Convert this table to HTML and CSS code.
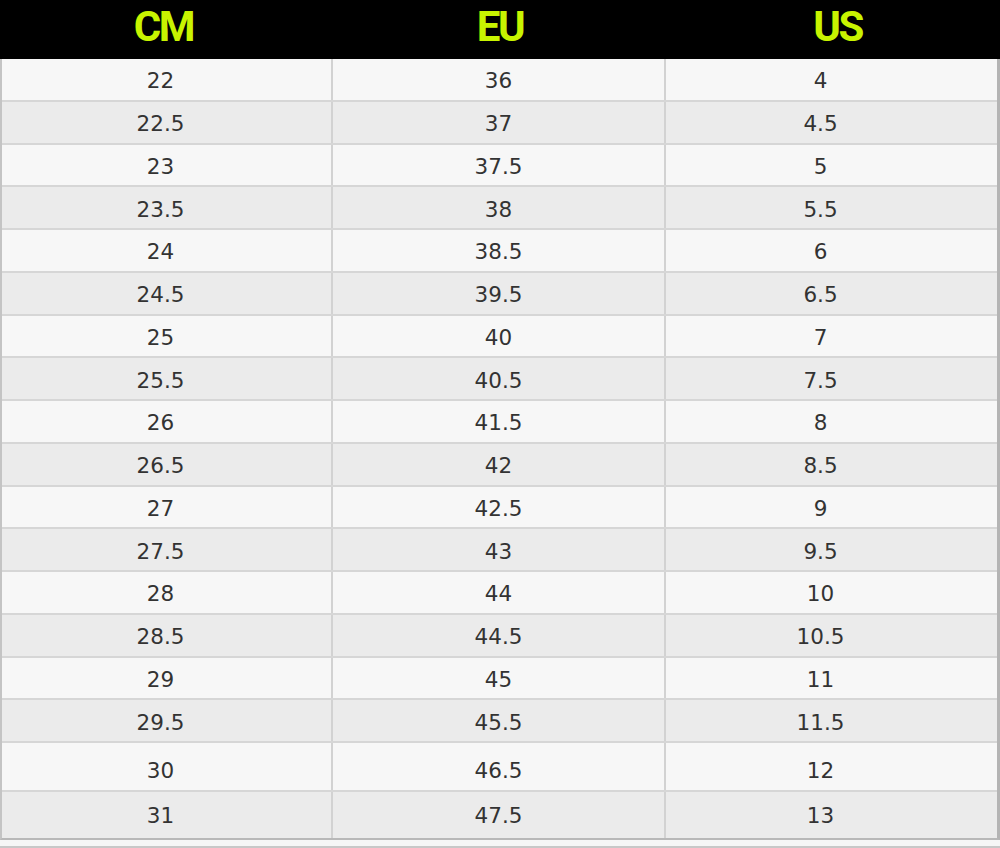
FILE: index.html
```html
<!DOCTYPE html>
<html>
<head>
<meta charset="utf-8">
<link rel="stylesheet" href="styles.css">
</head>
<body>
<div class="chart">
  <div class="head">
    <div class="hc h1">CM</div>
    <div class="hc h2">EU</div>
    <div class="hc h3">US</div>
  </div>
  <div class="body">
    <div class="row"><div class="c c1">22</div><div class="c c2">36</div><div class="c c3">4</div></div>
    <div class="row alt"><div class="c c1">22.5</div><div class="c c2">37</div><div class="c c3">4.5</div></div>
    <div class="row"><div class="c c1">23</div><div class="c c2">37.5</div><div class="c c3">5</div></div>
    <div class="row alt"><div class="c c1">23.5</div><div class="c c2">38</div><div class="c c3">5.5</div></div>
    <div class="row"><div class="c c1">24</div><div class="c c2">38.5</div><div class="c c3">6</div></div>
    <div class="row alt"><div class="c c1">24.5</div><div class="c c2">39.5</div><div class="c c3">6.5</div></div>
    <div class="row"><div class="c c1">25</div><div class="c c2">40</div><div class="c c3">7</div></div>
    <div class="row alt"><div class="c c1">25.5</div><div class="c c2">40.5</div><div class="c c3">7.5</div></div>
    <div class="row"><div class="c c1">26</div><div class="c c2">41.5</div><div class="c c3">8</div></div>
    <div class="row alt"><div class="c c1">26.5</div><div class="c c2">42</div><div class="c c3">8.5</div></div>
    <div class="row"><div class="c c1">27</div><div class="c c2">42.5</div><div class="c c3">9</div></div>
    <div class="row alt"><div class="c c1">27.5</div><div class="c c2">43</div><div class="c c3">9.5</div></div>
    <div class="row"><div class="c c1">28</div><div class="c c2">44</div><div class="c c3">10</div></div>
    <div class="row alt"><div class="c c1">28.5</div><div class="c c2">44.5</div><div class="c c3">10.5</div></div>
    <div class="row"><div class="c c1">29</div><div class="c c2">45</div><div class="c c3">11</div></div>
    <div class="row alt"><div class="c c1">29.5</div><div class="c c2">45.5</div><div class="c c3">11.5</div></div>
    <div class="row tall"><div class="c c1">30</div><div class="c c2">46.5</div><div class="c c3">12</div></div>
    <div class="row alt last"><div class="c c1">31</div><div class="c c2">47.5</div><div class="c c3">13</div></div>
  </div>
  <div class="foot"></div>
</div>
</body>
</html>
```
FILE: styles.css
```css
html, body {
  margin: 0;
  padding: 0;
  background: #f4f4f4;
}
.chart {
  width: 1000px;
  height: 848px;
  display: flex;
  flex-direction: column;
  overflow: hidden;
}
.head {
  height: 59px;
  background: #000;
  display: grid;
  grid-template-columns: 333px 334px 333px;
  align-items: center;
}
.hc {
  font-family: Roboto, "Liberation Sans", sans-serif;
  font-weight: 700;
  font-size: 42px;
  letter-spacing: -2.5px;
  color: #c8f400;
  text-align: center;
  line-height: 1;
  padding-bottom: 6px;
}
.h1 { padding-right: 6px; }
.h3 { padding-left: 8px; }
.body {
  border-left: 2px solid #c4c4c4;
  border-right: 3px solid #b4b4b4;
  border-bottom: 2px solid #b8b8b8;
  box-sizing: border-box;
  width: 1000px;
}
.row {
  height: 42.75px;
  box-sizing: border-box;
  display: grid;
  grid-template-columns: 331px 333px 1fr;
  background: #f7f7f7;
  border-bottom: 2px solid #d6d6d6;
}
.row.alt { background: #ebebeb; }
.row.tall { height: 49px; }
.row.tall .c { padding-top: 8px; }
.row.last { height: 46px; border-bottom: none; }
.row.last .c { padding-top: 0; }
.c {
  display: flex;
  align-items: center;
  justify-content: center;
  font-family: "DejaVu Sans", sans-serif;
  font-size: 21.5px;
  color: #333;
  border-right: 2px solid #d2d2d2;
  padding-top: 3px;
}
.c3 { border-right: none; }
.c1 { padding-right: 12px; }
.c3 { padding-right: 22px; }
.foot {
  flex: 1;
  background: #f6f6f6;
  border-bottom: 2px solid #c8c8c8;
}
```
